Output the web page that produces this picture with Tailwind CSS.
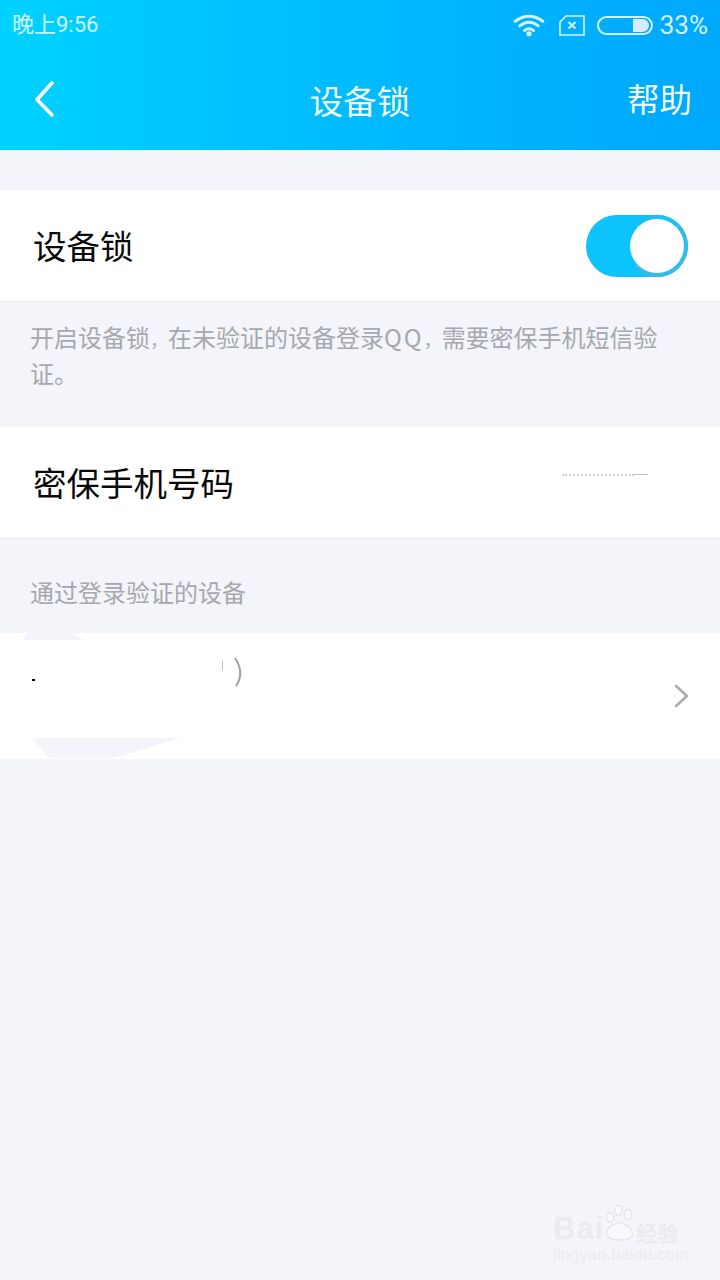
<!DOCTYPE html>
<html lang="zh">
<head>
<meta charset="utf-8">
<script src="https://cdn.jsdelivr.net/npm/@tailwindcss/browser@4"></script>
</head>
<body class="m-0">
<div class="relative w-[720px] h-[1280px] overflow-hidden bg-[#f3f5fa] font-['Noto_Sans_CJK_SC','Noto_Sans',sans-serif]">

  <header class="h-[150px] bg-gradient-to-r from-[#00d2ff] via-[#00baff] to-[#00a8fc] text-white flex flex-col">
    <div class="h-[50px] flex items-center pl-[12px] pr-[12px]">
      <span class="text-[22px] leading-none text-white/80 font-['Roboto','Noto_Sans_CJK_SC',sans-serif]">晚上9:56</span>
      <div class="ml-auto flex items-center">
        <svg width="32" height="24" viewBox="0 0 34 26" fill="none" stroke="#d4f3ff" stroke-linecap="round" stroke-width="3.2">
          <path d="M2 9 Q17 -2 32 9"/><path d="M7 14 Q17 6 27 14"/><path d="M12 19 Q17 15 22 19"/>
          <circle cx="17" cy="22.5" r="2.8" fill="#d4f3ff" stroke="none"/>
        </svg>
        <svg class="ml-[14px]" width="26" height="21" viewBox="0 0 26 21" fill="none" stroke="#d4f3ff" stroke-width="1.6">
          <path d="M7 1 H25 V20 H1 V7 Z"/><path d="M9.5 7 L16.5 13.5 M16.5 7 L9.5 13.5" stroke-width="2"/>
        </svg>
        <div class="ml-[12px] relative w-[56px] h-[19px] rounded-full border-[2px] border-[#d4f3ff]">
          <div class="absolute right-[2px] top-[1px] w-[16px] h-[13px] rounded-r-full bg-[#d8ebff]"></div>
        </div>
        <span class="ml-[7px] text-[26px] leading-none font-['Roboto',sans-serif] text-[#d4f3ff]">33%</span>
      </div>
    </div>
    <div class="relative flex-1 flex items-center justify-center">
      <svg class="absolute left-[33px] top-[30px]" width="22" height="38" viewBox="0 0 22 38" fill="none" stroke="white" stroke-width="3.6" stroke-linecap="round" stroke-linejoin="round">
        <path d="M19 3 L4 19.5 L19 35"/>
      </svg>
      <span class="text-[33.5px] leading-none text-white/95">设备锁</span>
      <span class="absolute right-[28px] top-[32px] text-[32.5px] leading-none text-white/95">帮助</span>
    </div>
  </header>

  <section class="mt-[40px] h-[112px] bg-white border-b border-[#e8eaf0] flex items-center pl-[33px] pr-[32px]">
    <span class="text-[33.5px] leading-none text-[#0a0a0a] pb-[2px]">设备锁</span>
    <div class="ml-auto relative w-[102px] h-[62px] rounded-full bg-[#0cc3fb]">
      <div class="absolute right-0 top-0 w-[62px] h-[62px] rounded-full border-[4px] border-[#35bce6] border-l-[#0cc3fb] border-t-[#1cc0f2] bg-white"></div>
    </div>
  </section>

  <p class="h-[125px] m-0 pt-[18px] pl-[30px] pr-[50px] text-[24px] leading-[34px] text-[#a6a8ad]">开启设备锁<span class="text-[18px]">，</span>在未验证的设备登录<span class="tracking-[2px]">QQ</span><span class="text-[18px]">，</span>需要密保手机短信验证。</p>

  <section class="relative h-[112px] bg-white border-b border-[#e8eaf0] flex items-center pl-[33px]">
    <span class="text-[33.5px] leading-none text-[#0a0a0a] pb-[2px]">密保手机号码</span>
    <div class="absolute left-[562px] top-[47px] w-[72px] h-[1px] border-t-2 border-dotted border-[#d4d4d4]"></div>
    <div class="absolute left-[632px] top-[47px] w-[16px] h-[1px] bg-[#c0c0c0]"></div>
  </section>

  <div class="h-[94px] pl-[30px] pt-[36px] text-[24px] leading-[34px] text-[#a6a8ad]">通过登录验证的设备</div>

  <section class="relative h-[126px] bg-white">
    <svg class="absolute left-0 top-0" width="260" height="126" viewBox="0 0 260 126">
      <path d="M28 0 H72 L83 7 H22 Z" fill="#f3f5fa"/>
      <path d="M32 105 H181 L113 125 H50 Z" fill="#f3f5fa"/>
      <path d="M222.5 27 V38" stroke="#c8c8c8" stroke-width="1"/>
      <path d="M235 25 Q245 40 236 53" fill="none" stroke="#a0a0a0" stroke-width="2"/>
    </svg>
    <div class="absolute left-[32px] top-[46px] w-[3px] h-[2px] bg-black"></div>
    <svg class="absolute left-[673px] top-[51px]" width="18" height="24" viewBox="0 0 18 24" fill="none" stroke="#a9adb5" stroke-width="2.6" stroke-linecap="round" stroke-linejoin="round">
      <path d="M3 2 L14 12 L3 22"/>
    </svg>
  </section>

  <div class="absolute left-[553px] top-[1202px] w-[130px] text-[#e9ebef]">
    <div class="flex items-end h-[44px]">
      <span class="text-[31px] leading-[34px] font-bold font-['Liberation_Sans',sans-serif] tracking-[1px]">Bai</span>
      <svg class="-ml-[1px] shrink-0" width="33" height="44" viewBox="0 0 36 44" fill="#f8f9fb" stroke="#e2e4e9" stroke-width="1.5">
        <ellipse cx="8" cy="15" rx="4" ry="5"/><ellipse cx="17" cy="7" rx="4" ry="5.5"/><ellipse cx="27" cy="12" rx="4" ry="5.5"/><path d="M4 34 Q3 26 12 23 Q18 18 25 23 Q33 27 32 35 Q28 41 18 39 Q8 41 4 34 Z"/>
      </svg>
      <span class="shrink-0 whitespace-nowrap text-[21px] leading-[28px] font-bold">经验</span>
    </div>
    <div class="text-[16px] leading-[20px] font-['Liberation_Sans',sans-serif] tracking-[0.4px] whitespace-nowrap -mt-[1px]">jingyan.baidu.com</div>
  </div>
</div>
</body>
</html>
